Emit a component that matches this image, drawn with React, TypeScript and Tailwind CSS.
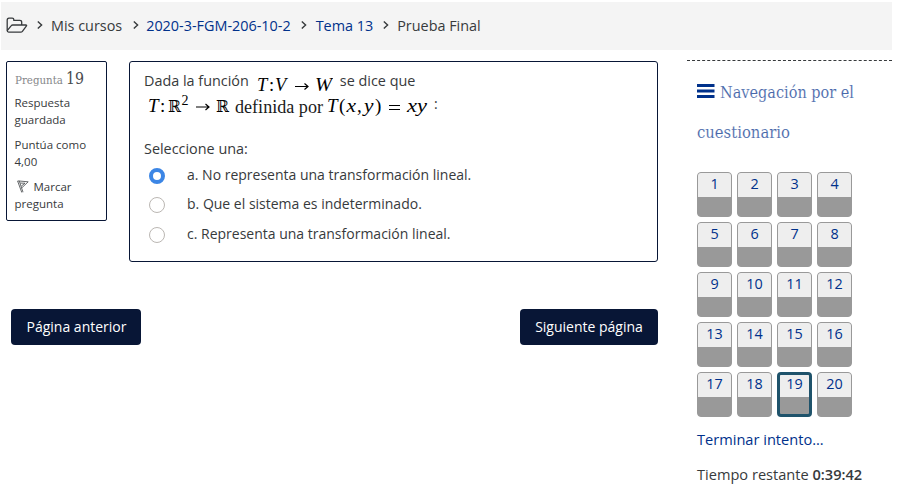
import React from "react";

const options = [
  { id: "a", text: "a. No representa una transformación lineal.", selected: true, row: "h-[29px]" },
  { id: "b", text: "b. Que el sistema es indeterminado.", selected: false, row: "h-[30px]" },
  { id: "c", text: "c. Representa una transformación lineal.", selected: false, row: "h-[29px]" },
];

const SERIF = '"Liberation Serif", serif';
const MATH = '"DejaVu Serif", "DejaVu Sans", serif';

function Chevron() {
  return (
    <svg width="6" height="8" viewBox="0 0 6 8" fill="none" stroke="#373a3c" strokeWidth="1.4">
      <path d="M0.8 0.5 4.6 4 0.8 7.5" />
    </svg>
  );
}

function FolderOpen() {
  return (
    <svg width="22" height="17" viewBox="0 0 22 17" fill="none" stroke="#373a3c" strokeWidth="1.3" strokeLinejoin="round">
      <path d="M1.2 13.6V3.2Q1.2 1.2 3 1.2H6.2Q7.8 1.2 7.8 2.5V3.4H13.8Q15.7 3.4 15.7 5.2V8" />
      <path d="M1.2 13.6 5.3 8.7Q5.8 8 6.8 8H19.7Q21.2 8 20.3 9.1L16.4 14.3Q15.8 15.1 14.7 15.1H2.6Q1.2 15.1 1.2 13.6Z" />
    </svg>
  );
}

function MappingFormula() {
  return (
    <svg className="ml-2 mt-[6px]" width="76" height="22" viewBox="0 0 76 22" fill="#000" fontFamily={SERIF} fontSize="18.5">
      <g fontStyle="italic">
        <text x="0" y="16">T</text>
        <text x="12" y="16" fontStyle="normal">:</text>
        <text x="18" y="16">V</text>
        <text x="58" y="16" textLength="17" lengthAdjust="spacingAndGlyphs">W</text>
      </g>
      <path d="M38 11.5H51M47.5 8.5 51 11.5 47.5 14.5" fill="none" stroke="#000" strokeWidth="1.2" />
    </svg>
  );
}

function DefinitionFormula() {
  return (
    <svg className="ml-1" width="281" height="27" viewBox="0 0 281 27" fill="#000" fontFamily={SERIF} fontSize="19">
      <text x="0" y="19" fontStyle="italic">T</text>
      <text x="12" y="19">:</text>
      <text x="20" y="19" fontFamily={MATH} fontSize="16.5" textLength="13" lengthAdjust="spacingAndGlyphs">ℝ</text>
      <text x="33.5" y="12" fontSize="14">2</text>
      <text x="68" y="19" fontFamily={MATH} fontSize="16.5" textLength="13" lengthAdjust="spacingAndGlyphs">ℝ</text>
      <text x="179" y="19" fontStyle="italic">T</text>
      <text x="191" y="19">(</text>
      <text x="198.5" y="19" fontStyle="italic" textLength="9.5" lengthAdjust="spacingAndGlyphs">x</text>
      <text x="209" y="19">,</text>
      <text x="216" y="19" fontStyle="italic" textLength="9.5" lengthAdjust="spacingAndGlyphs">y</text>
      <text x="227" y="19">)</text>
      <text x="259" y="19" fontStyle="italic" textLength="20" lengthAdjust="spacingAndGlyphs">xy</text>
      <text x="87" y="20" fontSize="18" fill="#1a1a1a" textLength="88" lengthAdjust="spacingAndGlyphs">definida por</text>
      <path d="M48 14H61M57.5 11 61 14 57.5 17M241 12.5H252M241 16.5H252" fill="none" stroke="#000" strokeWidth="1.2" />
    </svg>
  );
}

function QuestionInfo() {
  return (
    <aside className="h-[160px] w-[101px] shrink-0 rounded-[2px] border border-[#081636] pl-[7.5px] text-[11.5px] leading-[17px]">
      <h3 className="mt-[4px] h-5">
        <svg width="72" height="20" fontFamily={MATH}>
          <text x="0" y="18" fontSize="11.5" fill="#85878a" textLength="48" lengthAdjust="spacingAndGlyphs">Pregunta</text>
          <text x="51" y="18" fontSize="16.5" fill="#4a4c50" textLength="18" lengthAdjust="spacingAndGlyphs">19</text>
        </svg>
      </h3>
      <p className="mt-2">Respuesta<br />guardada</p>
      <p className="mt-2">Puntúa como<br />4,00</p>
      <p className="mt-2">
        <svg className="ml-[2px] mr-[5px] inline-block align-[-2px]" width="12" height="13" viewBox="0 0 12 13" fill="none" stroke="#55585a" strokeWidth="0.9">
          <path d="M0.6 1 4.8 12.5M2.2 0.8 6 12.2M0.6 1H2.2L11.2 1.8 4.6 8M3.2 3.1 8 3.2 4.3 6.1" />
        </svg>
        Marcar<br />pregunta
      </p>
    </aside>
  );
}

function QuestionCard() {
  return (
    <section className="h-[201px] w-[529px] rounded-[3px] border border-[#081636] pl-[14px]">
      <div className="mt-[7px] flex h-[23px] items-start text-[14.4px] leading-[23px]">
        <span>Dada la función</span>
        <MappingFormula />
        <span className="ml-[7px]">se dice que</span>
      </div>
      <div className="mt-px flex h-[25px] items-start leading-[22px]">
        <DefinitionFormula />
        <span className="ml-[5px]">:</span>
      </div>
      <p className="mt-5 text-[14.4px] leading-[21px]">Seleccione una:</p>
      <div className="mt-[3px]" role="radiogroup">
        {options.map((option) => (
          <label key={option.id} className={`flex items-start ${option.row}`}>
            <span
              className={`ml-[5px] mt-[6px] size-4 rounded-full bg-white ${
                option.selected ? "border-[4px] border-[#3c86e5]" : "border border-[#bbb7b3]"
              }`}
            />
            <span className="ml-[22px] leading-[25px]">{option.text}</span>
          </label>
        ))}
      </div>
    </section>
  );
}

function QuizNavigation() {
  return (
    <aside className="ml-[29px] mt-[10px] w-[205px] border-t border-dashed border-[#373a3c] pl-[10px] text-[14.6px]">
      <h2 className="mt-[10px] h-20">
        <span className="flex h-10 items-center">
          <svg width="18" height="14" viewBox="0 0 18 14" fill="#00318b">
            <path d="M0 0H17.5V3H0ZM0 5.5H17.5V8.5H0ZM0 11H17.5V14H0Z" />
          </svg>
          <svg className="ml-[5px] overflow-visible" width="140" height="28" fontFamily={MATH} fontSize="16.5" fill="#4868aa" stroke="#fff" strokeWidth="0.12">
            <text x="0" y="21" textLength="134" lengthAdjust="spacingAndGlyphs">Navegación por el</text>
          </svg>
        </span>
        <svg className="mt-[6px] overflow-visible" width="110" height="28" fontFamily={MATH} fontSize="16.5" fill="#4868aa" stroke="#fff" strokeWidth="0.12">
          <text x="0" y="21" textLength="93" lengthAdjust="spacingAndGlyphs">cuestionario</text>
        </svg>
      </h2>
      <nav className="mt-[21px] grid w-[155px] grid-cols-4 gap-[5px]">
        {Array.from({ length: 20 }, (_, i) => i + 1).map((n) => (
          <a
            key={n}
            className={`block h-[45px] w-[35px] overflow-hidden rounded-[4px] bg-[#999] text-center text-[14.4px] text-[#00318b] ${
              n === 19 ? "border-[3px] border-[#1f536b]" : "border border-[#999]"
            }`}
          >
            <span className={`block bg-[#eee] ${n === 19 ? "h-[22px] leading-[18px]" : "h-6 leading-[22px]"}`}>{n}</span>
          </a>
        ))}
      </nav>
      <a className="mt-3 block leading-[21px] text-[#00318b]">Terminar intento...</a>
      <p className="mt-[14px] leading-[21px]">
        Tiempo restante <span className="font-semibold">0:39:42</span>
      </p>
    </aside>
  );
}

export default function App() {
  return (
    <div className="h-[485px] w-[898px] overflow-hidden bg-white pl-px pt-[2px] font-['Open_Sans',sans-serif] text-[14px] text-[#373a3c]">
      <header className="flex h-12 w-[891px] items-center bg-[#f4f4f4] pb-[2px] pl-[5px] text-[14.4px] leading-[21px]">
        <FolderOpen />
        <span className="ml-[9px]"><Chevron /></span>
        <span className="ml-[8px]">Mis cursos</span>
        <span className="ml-[11px]"><Chevron /></span>
        <a className="ml-[7px] text-[#00318b]">2020-3-FGM-206-10-2</a>
        <span className="ml-[10px]"><Chevron /></span>
        <a className="ml-[9px] text-[#00318b]">Tema 13</a>
        <span className="ml-[10px]"><Chevron /></span>
        <span className="ml-[8px]">Prueba Final</span>
      </header>
      <div className="flex">
        <main className="ml-[5px] mt-[11px] w-[652px]">
          <div className="flex gap-[22px]">
            <QuestionInfo />
            <QuestionCard />
          </div>
          <div className="ml-[5px] mt-[47px] flex justify-between">
            <button className="h-9 w-[130px] rounded-[4px] bg-[#081636] pb-[2px] pl-px text-white">Página anterior</button>
            <button className="h-9 w-[138px] rounded-[4px] bg-[#081636] pb-[2px] text-white">Siguiente página</button>
          </div>
        </main>
        <QuizNavigation />
      </div>
    </div>
  );
}
